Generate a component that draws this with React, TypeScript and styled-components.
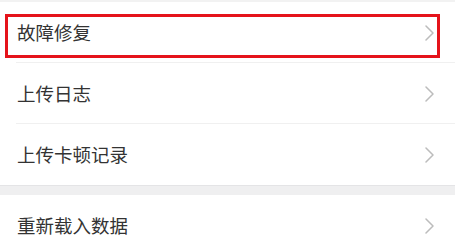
import React from "react";
import styled, { createGlobalStyle } from "styled-components";

const Global = createGlobalStyle`
  html, body { margin: 0; padding: 0; background: #ffffff; }
  body { font-family: "Noto Sans CJK SC", "Noto Sans", sans-serif; }
`;

const Page = styled.div`
  width: 455px;
  background: #ffffff;
`;

const TopRule = styled.div`
  height: 2px;
  background: #f2f2f2;
`;

const Group = styled.div`
  background: #ffffff;
`;

const GroupGap = styled.div`
  height: 10px;
  background: #efeff0;
  border-top: 1px solid #e4e4e6;
  box-sizing: border-box;
`;

const Row = styled.div<{ $divider?: boolean }>`
  position: relative;
  height: 61px;
  display: flex;
  align-items: center;
  justify-content: space-between;
  padding: 0 21px 0 17px;
  box-sizing: border-box;
  &::after {
    content: "";
    display: ${(p) => (p.$divider ? "block" : "none")};
    position: absolute;
    left: 16px;
    right: 0;
    bottom: 0;
    height: 1px;
    background: #f0f0f0;
  }
`;

const Label = styled.span`
  font-size: 18.5px;
  color: #333333;
  line-height: 1;
  letter-spacing: 0;
`;

const Highlight = styled.div`
  position: absolute;
  left: 5px;
  right: 15px;
  top: 12px;
  bottom: 5px;
  border: 3px solid #e5131b;
  box-sizing: border-box;
  pointer-events: none;
`;

const Chevron = () => (
  <svg width="9" height="16" viewBox="0 0 9 16" aria-hidden="true">
    <polyline
      points="1,1 8,8 1,15"
      fill="none"
      stroke="#bcbcbc"
      strokeWidth="1.5"
      strokeLinecap="round"
      strokeLinejoin="round"
    />
  </svg>
);

type Item = { label: string; highlight?: boolean };

const groups: Item[][] = [
  [{ label: "故障修复", highlight: true }, { label: "上传日志" }, { label: "上传卡顿记录" }],
  [{ label: "重新载入数据" }],
];

export default function App() {
  return (
    <Page>
      <Global />
      <TopRule />
      {groups.map((g, gi) => (
        <React.Fragment key={gi}>
          {gi > 0 && <GroupGap />}
          <Group>
            {g.map((it, i) => (
              <Row key={it.label} $divider={i < g.length - 1}>
                <Label>{it.label}</Label>
                <Chevron />
                {it.highlight && <Highlight />}
              </Row>
            ))}
          </Group>
        </React.Fragment>
      ))}
    </Page>
  );
}
